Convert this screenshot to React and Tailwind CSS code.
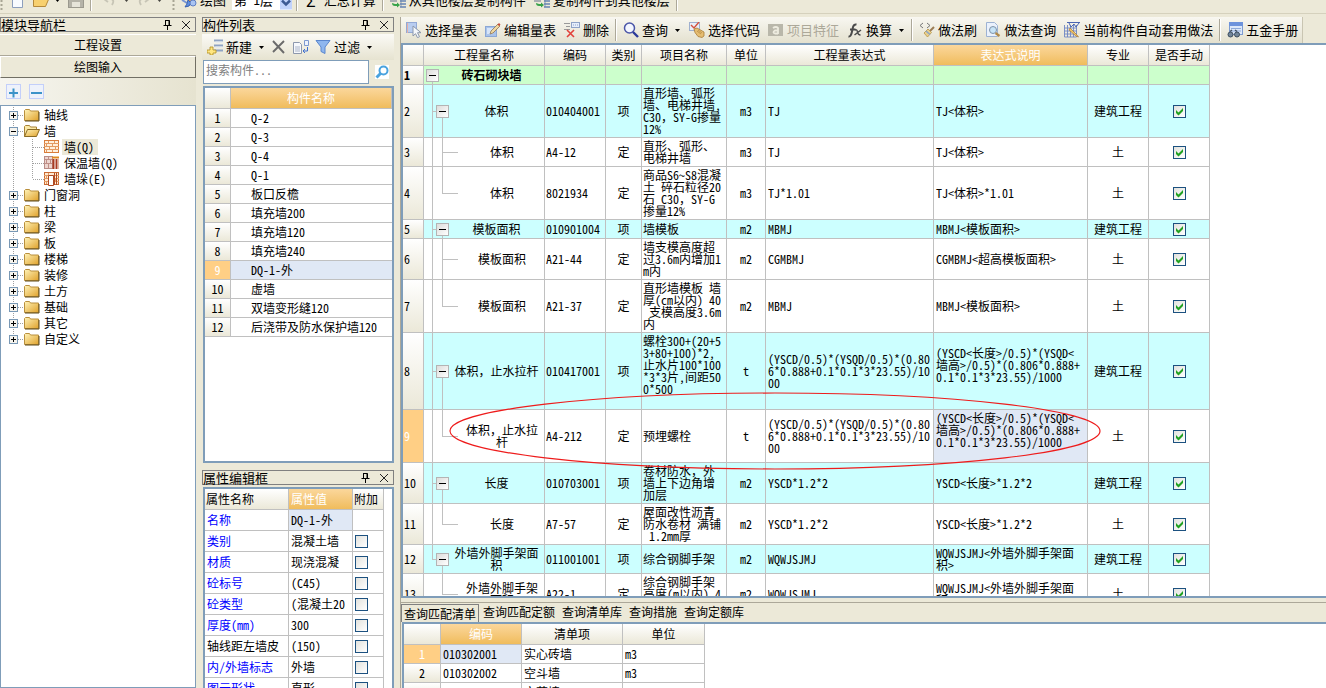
import React from "react";

const FONT = "font-['Noto_Sans_Mono_CJK_SC','Noto_Sans_CJK_SC',monospace]";

/* ---------- data ---------- */

const treeItems = [
  { label: "轴线", kind: "closed" },
  { label: "墙", kind: "open" },
  { label: "墙(Q)", kind: "child", icon: "brick", selected: true },
  { label: "保温墙(Q)", kind: "child", icon: "insulated" },
  { label: "墙垛(E)", kind: "child", icon: "pier", last: true },
  { label: "门窗洞", kind: "closed" },
  { label: "柱", kind: "closed" },
  { label: "梁", kind: "closed" },
  { label: "板", kind: "closed" },
  { label: "楼梯", kind: "closed" },
  { label: "装修", kind: "closed" },
  { label: "土方", kind: "closed" },
  { label: "基础", kind: "closed" },
  { label: "其它", kind: "closed" },
  { label: "自定义", kind: "closed", end: true },
];

const components = [
  "Q-2", "Q-3", "Q-4", "Q-1", "板口反檐", "填充墙200", "填充墙120", "填充墙240",
  "DQ-1-外", "虚墙", "双墙变形缝120", "后浇带及防水保护墙120",
];

const properties = [
  { name: "名称", value: "DQ-1-外", selected: true, noBox: true },
  { name: "类别", value: "混凝土墙" },
  { name: "材质", value: "现浇混凝" },
  { name: "砼标号", value: "(C45)" },
  { name: "砼类型", value: "(混凝土20" },
  { name: "厚度(mm)", value: "300" },
  { name: "轴线距左墙皮", value: "(150)", plain: true },
  { name: "内/外墙标志", value: "外墙" },
  { name: "图元形状", value: "直形" },
];

const EXPR = "(YSCD/0.5)*(YSQD/0.5)*(0.80\n6*0.888+0.1*0.1*3*23.55)/10\n00";
const EXPR_NOTE = "(YSCD<长度>/0.5)*(YSQD<\n墙高>/0.5)*(0.806*0.888+\n0.1*0.1*3*23.55)/1000\n ";

const rows = [
  { h: "h-[19px]", level: 0, name: "砖石砌块墙" },
  { h: "h-[53px]", level: 1, name: "体积", code: "010404001", type: "项", item: "直形墙、弧形\n墙、电梯井墙,\nC30，SY-G掺量\n12%", unit: "m3", expr: "TJ", note: "TJ<体积>", major: "建筑工程" },
  { h: "h-[29px]", level: 2, name: "体积", code: "A4-12", type: "定", item: "直形、弧形、\n电梯井墙", unit: "m3", expr: "TJ", note: "TJ<体积>", major: "土" },
  { h: "h-[53px]", level: 2, last: true, name: "体积", code: "8021934", type: "定", item: "商品S6~S8混凝\n土 碎石粒径20\n石 C30，SY-G\n掺量12%", unit: "m3", expr: "TJ*1.01", note: "TJ<体积>*1.01", major: "土" },
  { h: "h-[19px]", level: 1, name: "模板面积", code: "010901004", type: "项", item: "墙模板", unit: "m2", expr: "MBMJ", note: "MBMJ<模板面积>", major: "建筑工程" },
  { h: "h-[41px]", level: 2, name: "模板面积", code: "A21-44", type: "定", item: "墙支模高度超\n过3.6m内增加1\nm内", unit: "m2", expr: "CGMBMJ", note: "CGMBMJ<超高模板面积>", major: "土" },
  { h: "h-[53px]", level: 2, last: true, name: "模板面积", code: "A21-37", type: "定", item: "直形墙模板 墙\n厚(cm以内) 40\n 支模高度3.6m\n内", unit: "m2", expr: "MBMJ", note: "MBMJ<模板面积>", major: "土" },
  { h: "h-[77px]", level: 1, name: "体积，止水拉杆", code: "010417001", type: "项", item: "螺栓300+(20+5\n3+80+100)*2,\n止水片100*100\n*3*3片,间距50\n0*500", lift: true, unit: "t", expr: EXPR, note: EXPR_NOTE, major: "建筑工程" },
  { h: "h-[53px]", level: 2, last: true, current: true, name: "体积，止水拉\n杆", code: "A4-212", type: "定", item: "预埋螺栓", unit: "t", expr: EXPR, note: EXPR_NOTE, major: "土" },
  { h: "h-[41px]", level: 1, name: "长度", code: "010703001", type: "项", item: "卷材防水，外\n墙上下边角增\n加层", unit: "m2", expr: "YSCD*1.2*2", note: "YSCD<长度>*1.2*2", major: "建筑工程" },
  { h: "h-[41px]", level: 2, last: true, name: "长度", code: "A7-57", type: "定", item: "屋面改性沥青\n防水卷材 满铺\n 1.2mm厚", unit: "m2", expr: "YSCD*1.2*2", note: "YSCD<长度>*1.2*2", major: "土" },
  { h: "h-[29px]", level: 1, end: true, name: "外墙外脚手架面\n积", code: "011001001", type: "项", item: "综合钢脚手架", unit: "m2", expr: "WQWJSJMJ", note: "WQWJSJMJ<外墙外脚手架面\n积>", major: "建筑工程" },
  { h: "h-[41px]", level: 2, last: true, after: true, name: "外墙外脚手架\n面积", code: "A22-1", type: "定", item: "综合钢脚手架\n高度(m以内) 4\n0.5", unit: "m2", expr: "WQWJSJMJ", note: "WQWJSJMJ<外墙外脚手架面\n积>", major: "土" },
];

/* ---------- small parts ---------- */

const HEAD = "bg-linear-to-b from-white to-[#ebe8d8] font-normal";
const HEAD_ON = "bg-linear-to-b from-[#fbd79b] to-[#f0bc5b] font-normal text-white";
const ROWHEAD = "bg-linear-to-b from-white to-[#ebe8d8] font-normal";
const CELL = "border-r border-b border-[#c0c0c0] p-0";

function Tick({ label, defaultChecked = false }) {
  return (
    <span className="inline-grid size-[13px] align-middle">
      <input
        type="checkbox"
        aria-label={label}
        defaultChecked={defaultChecked}
        className="peer col-start-1 row-start-1 size-[13px] appearance-none border border-[#1c5180] bg-linear-to-br from-[#e2e2dd] to-white"
      />
      <svg viewBox="0 0 13 13" className="pointer-events-none invisible z-10 col-start-1 row-start-1 size-[13px] peer-checked:visible">
        <path d="M3 5v3l2.500 2.500L10 6V3L5.500 7.500z" fill="#21a121" />
      </svg>
    </span>
  );
}

function PanelTitle({ children }) {
  return (
    <div className="flex h-[15px] shrink-0 items-center border border-[#808080] pr-1">
      <h2 className="flex-1 text-[13px] leading-[13px]">{children}</h2>
      <button type="button" aria-label="固定" className="mr-2 size-2.5">
        <svg viewBox="0 0 10 10" className="size-2.5" fill="none" stroke="#000">
          <path d="M2.500 0.500h4v5M6 0.500v5M2.500 0v6M0.500 5.500h8M4.500 6v4" />
        </svg>
      </button>
      <button type="button" aria-label="关闭" className="size-2.5">
        <svg viewBox="0 0 10 10" className="size-2.5" fill="none" stroke="#222">
          <path d="M1 1l8 8M9 1l-8 8" />
        </svg>
      </button>
    </div>
  );
}

const Caret = () => (
  <svg viewBox="0 0 5 3" className="h-[3px] w-[5px]">
    <path d="M0 0h5L2.500 3z" fill="#000" />
  </svg>
);

const Sep = () => <span className="-mx-0.5 h-[22px] w-0.5 shrink-0 border-l border-[#aca899] bg-white" />;

const Grip = () => (
  <svg viewBox="0 0 3 24" className="h-6 w-[3px]">
    <path d="M1.500 0v24" stroke="#a8a594" strokeWidth="2" strokeDasharray="2 2" />
  </svg>
);

function Icon({ name }) {
  return (
    <svg viewBox="0 0 16 16" className="size-4 shrink-0" fill="none">
      {ICONS[name]}
    </svg>
  );
}

const ICONS = {
  pickTable: (
    <>
      <rect x="0.500" y="0.500" width="10" height="10" fill="#b9cdf0" stroke="#93a9d6" />
      <path d="M1.500 1v10" stroke="#e3b0a8" />
      <path d="M7 4v10l2.500-2.300 2 4 2-1-2-4H15z" fill="#f4f7fb" stroke="#8b97ab" />
    </>
  ),
  editTable: (
    <>
      <rect x="0.500" y="4.500" width="11" height="10" fill="#a9c3ea" stroke="#8ba7d5" />
      <rect x="2" y="6" width="6" height="6" fill="#d6e4f8" />
      <path d="M5 12l1-3 7-7 2 2-7 7z" fill="#f0d9a0" stroke="#8d7558" strokeWidth="0.800" />
      <path d="M12.500 2.500L14 1l1.500 1.500L14 4z" fill="#c94b36" />
    </>
  ),
  remove: (
    <>
      <path d="M0 1.500h6M2 4.500h4M0 7.500h6" stroke="#999" />
      <rect x="7.500" y="0.500" width="8" height="5" fill="#e6eefb" stroke="#8ea2c6" />
      <path d="M9 3h5" stroke="#8ea2c6" strokeDasharray="1 1" />
      <path d="M3 8l7 7M10 8l-7 7" stroke="#e2413a" strokeWidth="1.600" />
    </>
  ),
  search: (
    <>
      <circle cx="6.500" cy="6" r="5" fill="#f3f6ff" stroke="#4a55a8" strokeWidth="1.500" />
      <path d="M10 10l5 5" stroke="#2c3a9a" strokeWidth="2.400" />
    </>
  ),
  pickCode: (
    <>
      <rect x="0.500" y="0.500" width="10" height="8" fill="#e8eef8" stroke="#9fb0cf" />
      <path d="M2 3l3 3 5-6" stroke="#d4513c" strokeWidth="1.400" />
      <path d="M5 7l3-1 7 4v4l-2 1.500-4-1-3-4z" fill="#e5bd72" stroke="#a87b36" strokeWidth="0.800" />
      <path d="M8 9l4 3M9 8l4 3" stroke="#a87b36" strokeWidth="0.600" />
    </>
  ),
  feature: (
    <>
      <rect x="0" y="2" width="15" height="12" fill="#b9b7aa" />
      <path d="M5 6q3-2 5 0v6M10 8.500H7q-3 2 0 3h3" stroke="#eeece0" strokeWidth="1.800" />
    </>
  ),
  fx: (
    <>
      <path d="M1.500 14.500q2.500 0.500 3.500-5l1-4.500q1-3 3.500-2.500M3 7.500h5.500" stroke="#4a4a4a" strokeWidth="2" />
      <path d="M8 8q2-1 2.500 2t3 3M14 8L7.500 13" stroke="#4a4a4a" strokeWidth="1.500" />
    </>
  ),
  brush: (
    <>
      <path d="M4 1L1 3.500 4 6M8 1l3 2.500L8 6" stroke="#777" />
      <path d="M15 5l-4 4" stroke="#9c7d55" strokeWidth="2" />
      <path d="M9 7l3.500 3.500L8.500 15l-3.500-4z" fill="#e9cf8a" stroke="#b99545" strokeWidth="0.800" />
      <path d="M7 9l4 3.500" stroke="#8aa5c9" strokeWidth="1.500" />
    </>
  ),
  docSearch: (
    <>
      <path d="M1.500 0.500h8l3 3v11h-11z" fill="#eaf1fc" stroke="#9db2d3" />
      <circle cx="8" cy="8" r="3.500" fill="#c7e4f7" stroke="#7f93a8" />
      <path d="M10.500 11l4 3" stroke="#b08a4a" strokeWidth="2.200" />
    </>
  ),
  autoApply: (
    <>
      <path d="M0.500 3v12h12V3M0.500 6h12M0.500 9h12M0.500 12h12M3.500 3v12M6.500 3v12M9.500 3v12" stroke="#6f87c4" strokeWidth="0.900" />
      <path d="M3 0.500h13M5 1l2 4 3-3 2 3 3-4" stroke="#4b66b2" />
      <path d="M6 6l7 7 1.500 2-2.500-1-7-6z" fill="#f1c868" stroke="#a97737" strokeWidth="0.700" />
    </>
  ),
  handbook: (
    <>
      <rect x="2.500" y="0.500" width="13" height="12" fill="#dce8fa" stroke="#7c9bd2" />
      <rect x="2" y="0" width="14" height="4" fill="#6d93dc" />
      <path d="M4 6.500h10M4 9h10" stroke="#8eaada" />
      <circle cx="3.500" cy="12.500" r="2.500" fill="#72869a" stroke="#3d4d5e" />
      <circle cx="10" cy="12.500" r="2.500" fill="#72869a" stroke="#3d4d5e" />
      <path d="M3 9.500l2-1.500M10 9.500L8 8" stroke="#3d4d5e" strokeWidth="1.500" />
    </>
  ),
  create: (
    <>
      <path d="M7 1.500h9M7 6.500h9M7 11.500h9" stroke="#8fa3c4" strokeWidth="2" />
      <path d="M8.500 3h7M8.500 8h7" stroke="#dce5f3" />
      <path d="M3 8h3v3h3v3H6v2H3v-2H0v-3h3z" fill="#ffe680" stroke="#b08d20" strokeWidth="0.800" />
    </>
  ),
  cross: <path d="M2 2l11 12M13 2L2 13" stroke="#6b6b6b" strokeWidth="1.900" />,
  copy: (
    <>
      <path d="M0.500 3.500h6l2 2v9h-8z" fill="#f6f8fc" stroke="#8d98ad" />
      <path d="M2 8h5M2 10h5M2 12h5" stroke="#aab4c8" />
      <path d="M11.500 1.500h4v5h-4z" fill="#eef3fd" stroke="#7e9ad0" />
      <path d="M14.500 8v4h-4M12 10l-2 2 2 2" stroke="#3f6fd0" />
    </>
  ),
  filter: <path d="M1 1.500h14L10 8v6.500l-4-2V8z" fill="#8eb6ee" stroke="#5a86cd" />,
  newDoc: <path d="M3.500 0.500h7l3 3v12h-10z" fill="#f8fbff" stroke="#8d9fbd" />,
  folder: <path d="M0.500 14.500V3.500h5l1 2h6v2h3l-3 7z" fill="#f7d06f" stroke="#b4893a" />,
  save: (
    <>
      <rect x="0.500" y="0.500" width="15" height="15" fill="#b5b3a8" stroke="#9b998e" />
      <rect x="4" y="10" width="8" height="5" fill="#e6e4d9" />
    </>
  ),
  undo: <path d="M2 7l3-4M2 7l4 3M2 7h7q4 1 1 6" stroke="#b8b6a8" strokeWidth="1.800" />,
  redo: <path d="M14 7l-3-4M14 7l-4 3M14 7H7q-4 1-1 6" stroke="#b8b6a8" strokeWidth="1.800" />,
  draw: (
    <>
      <path d="M1 3l6 3M1 8l5 3" stroke="#7896d4" strokeWidth="2" />
      <path d="M15 1L8 9" stroke="#d99a55" strokeWidth="2.500" />
      <path d="M7 8l3 3q-1 4-6 4 2-2 3-7z" fill="#5f8fe0" stroke="#3c62ae" />
      <circle cx="12" cy="11" r="3" fill="#a9c4f2" stroke="#5e7fc4" />
    </>
  ),
  floorCopy: (
    <>
      <rect x="0" y="1" width="7" height="9" fill="#a9adb3" />
      <path d="M1 3.500h5M1 6.500h5" stroke="#dfe3e8" />
      <path d="M11 1v14" stroke="#8798ae" />
      <path d="M10 3h6M10 6h6M10 9h6M10 12h6M10 15h6" stroke="#6684b4" strokeWidth="1.600" />
      <path d="M2 11q0 3 3 3h2v1.500l3-2.500-3-2.500V12H5z" fill="#38a34a" />
    </>
  ),
};

function Tool({ icon, caret, disabled, children }) {
  return (
    <button type="button" disabled={disabled} className="flex shrink-0 items-center gap-[3px] text-[13px] leading-4 whitespace-nowrap disabled:text-[#aca899]">
      {icon && <Icon name={icon} />}
      <span>{children}</span>
      {caret && <span className="flex pr-px pl-1"><Caret /></span>}
    </button>
  );
}

/* ---------- top strip ---------- */

function TopBar() {
  return (
    <header className="flex h-[14px] shrink-0 items-end overflow-hidden border-b border-[#d5d1bd] bg-[#ece9d8]">
      <div className="flex h-[26px] shrink-0 items-center">
        <Grip />
        <button type="button" aria-label="新建文件" className="ml-1.5"><Icon name="newDoc" /></button>
        <button type="button" aria-label="打开" className="ml-2 flex items-center gap-1.5"><Icon name="folder" /><Caret /></button>
        <button type="button" aria-label="保存" className="mr-2 ml-2"><Icon name="save" /></button>
        <Sep />
        <button type="button" aria-label="撤销" className="ml-3 flex items-center gap-1.5 opacity-70"><Icon name="undo" /><Caret /></button>
        <button type="button" aria-label="恢复" className="mr-2.5 ml-1.5 flex items-center gap-1.5 opacity-70"><Icon name="redo" /><Caret /></button>
        <Grip />
        <span className="ml-1.5"><Tool icon="draw">绘图</Tool></span>
        <div className="relative mr-1.5 ml-1.5 flex h-[19px] w-[60px] bg-white">
          <select aria-label="楼层" className="w-full appearance-none pl-0.5 text-[13px] leading-4">
            <option>第 1层</option>
          </select>
          <svg viewBox="0 0 12 18" className="pointer-events-none absolute top-0 right-0 h-[19px] w-3" fill="none">
            <rect width="12" height="18" fill="#c2d3fb" />
            <path d="M2 9l4 4 4-4" stroke="#3d5a94" strokeWidth="2.500" />
          </svg>
        </div>
        <Sep />
        <button type="button" className="mr-2 ml-2.5 flex items-center gap-2 text-[13px] whitespace-nowrap"><span className="text-base">Σ</span>汇总计算</button>
        <Sep />
        <div className="mr-2 ml-2 flex gap-2">
          <Tool icon="floorCopy">从其他楼层复制构件</Tool>
          <Tool icon="floorCopy">复制构件到其他楼层</Tool>
        </div>
        <Sep />
      </div>
    </header>
  );
}

/* ---------- left: navigation ---------- */

function TreeGlyph({ item }) {
  const dot = { stroke: "#a0a0a0", strokeDasharray: "1 1" };
  if (item.kind === "child") {
    return (
      <svg viewBox="0 0 43 16" className="h-4 w-[43px] shrink-0" fill="none">
        <path d="M12.500 0v16" {...dot} />
        <path d={item.last ? "M31.500 0v8" : "M31.500 0v16"} {...dot} />
        <path d="M32 8.500h11" {...dot} />
      </svg>
    );
  }
  return (
    <svg viewBox="0 0 23 16" className="h-4 w-[23px] shrink-0" fill="none">
      <path d={item.end ? "M12.500 0v8" : "M12.500 0v16"} {...dot} />
      <path d="M17 8.500h6" {...dot} />
      <rect x="8.500" y="4.500" width="8" height="8" fill="#f6f4ee" stroke="#7898b5" />
      <path d={item.kind === "open" ? "M10 8.500h5" : "M10 8.500h5M12.500 6v5"} stroke="#000" />
    </svg>
  );
}

function TreeIcon({ item }) {
  const brick = "M0 4.500h15M0 7.500h15M0 10.500h15M4.500 2v2M10.500 2v2M2.500 5v2M8.500 5v2M5.500 8v2M11.500 8v2M2.500 11v2M8.500 11v2";
  return (
    <svg viewBox="0 0 16 16" className="size-4 shrink-0" fill="none">
      <defs>
        <linearGradient id="fold" x1="0" y1="0" x2="1" y2="1">
          <stop offset="0" stopColor="#fff3b8" />
          <stop offset="1" stopColor="#e0a22c" />
        </linearGradient>
      </defs>
      {item.kind === "closed" && (
        <>
          <path d="M0.500 13.500v-10l1-1h4l1 1.500h8v9.500z" fill="url(#fold)" stroke="#b98f3c" />
          <path d="M1 14h14V5" stroke="#5f4a18" />
        </>
      )}
      {item.kind === "open" && (
        <>
          <path d="M0.500 13.500v-10l1-1h4l1 1.500h6v2.500" fill="#fbe9a6" stroke="#a88236" />
          <path d="M0.500 13.500l3-7h12l-3 7z" fill="url(#fold)" stroke="#8a6a24" />
        </>
      )}
      {item.icon === "brick" && (
        <>
          <rect x="0.500" y="1.500" width="14" height="12" fill="#fff0dc" stroke="#d97c3a" />
          <path d={brick} stroke="#e39a62" />
        </>
      )}
      {item.icon === "insulated" && (
        <>
          <rect x="0.500" y="1.500" width="8" height="12" fill="#edd5cf" stroke="#b98c86" />
          <path d="M1 4.500h8M1 8.500h8M4.500 2v2M2.500 5v3M6.500 5v3M4.500 9v4" stroke="#bf8f88" />
          <path d="M8 2.500h7" stroke="#e08a22" strokeWidth="2" />
          <path d="M9.500 4v10M12.500 4v10" stroke="#a83a22" strokeWidth="2" />
          <path d="M14.500 3v11" stroke="#e3b9a6" />
        </>
      )}
      {item.icon === "pier" && (
        <>
          <rect x="0.500" y="1.500" width="14" height="12" fill="#ffe9d2" stroke="#c96a33" />
          <path d={brick} stroke="#e39a62" />
          <path d="M4.500 4.500h5v10h-5z" fill="#fff" stroke="#b04a22" />
          <path d="M10.500 2v12M12.500 2v12" stroke="#b04a22" />
        </>
      )}
    </svg>
  );
}

function NavPanel() {
  return (
    <aside className="flex w-[196px] shrink-0 flex-col">
      <PanelTitle>模块导航栏</PanelTitle>
      <button type="button" className="mt-0.5 h-[22px] shrink-0 border-t border-b border-t-white border-b-[#aca899] leading-5">工程设置</button>
      <button type="button" className="h-[22px] shrink-0 border border-t-white border-r-[#716f64] border-b-[#716f64] border-l-white leading-5">绘图输入</button>
      <div className="flex h-[27px] shrink-0 items-center gap-2 bg-linear-to-r from-[#f6f5ef] to-[#e6e3d0] pl-1.5">
        {["展开", "折叠"].map((t, i) => (
          <button key={t} type="button" aria-label={t} className="size-[15px] border border-[#c3cffa] bg-[#eef2fb]">
            <svg viewBox="0 0 13 13" className="size-[13px]" fill="none" stroke="#3c93c8" strokeWidth="2">
              <path d={i === 0 ? "M2 8h9M6.500 3.500v9" : "M1 8h11"} />
            </svg>
          </button>
        ))}
      </div>
      <ul className="min-h-0 flex-1 overflow-hidden border border-[#7f9db9] bg-white pt-px">
        {treeItems.map((item) => (
          <li key={item.label} className="flex h-4 items-center">
            <TreeGlyph item={item} />
            <TreeIcon item={item} />
            <span className={item.selected ? "ml-0.5 bg-[#ece9d8] pr-1 pl-0.5 leading-4" : "ml-0.5 px-0.5 leading-4"}>
              {item.label}
            </span>
          </li>
        ))}
      </ul>
    </aside>
  );
}

/* ---------- middle: component list + properties ---------- */

function ComponentPanel() {
  return (
    <section className="flex min-h-0 flex-1 flex-col">
      <PanelTitle>构件列表</PanelTitle>
      <div className="mt-0.5 flex h-[26px] shrink-0 items-center gap-1.5 bg-linear-to-b from-[#fbfaf6] to-[#e6e3d0] pl-[5px]">
        <Tool icon="create" caret>新建</Tool>
        <button type="button" aria-label="删除"><Icon name="cross" /></button>
        <button type="button" aria-label="复制"><Icon name="copy" /></button>
        <Tool icon="filter" caret>过滤</Tool>
      </div>
      <div className="flex h-6 shrink-0 gap-1.5 pl-px">
        <input aria-label="搜索构件" placeholder="搜索构件..." className="w-[166px] border border-[#7f9db9] bg-white pb-1 pl-0.5 text-xs placeholder:text-[#808080]" />
        <button type="button" aria-label="搜索" className="my-auto size-3.5 bg-white">
          <svg viewBox="0 0 14 14" className="size-3.5" fill="none" stroke="#4aa3df" strokeWidth="2">
            <circle cx="8.500" cy="5.500" r="4" />
            <path d="M5.500 8.500l-4 4" strokeWidth="3" />
          </svg>
        </button>
      </div>
      <div className="mt-0.5 ml-px min-h-0 flex-1 overflow-hidden border-2 border-[#7f9db9] bg-white">
        <table className="w-full table-fixed border-separate border-spacing-0">
          <colgroup><col className="w-[26px]" /><col /></colgroup>
          <thead>
            <tr className="h-[21px]">
              <th className={`${CELL} ${HEAD}`} />
              <th className={`${CELL} ${HEAD_ON}`}>构件名称</th>
            </tr>
          </thead>
          <tbody>
            {components.map((c, i) => (
              <tr key={c} className="h-[19px]">
                <th scope="row" className={i === 8 ? `${CELL} bg-[#ffcf85] font-normal text-white` : `${CELL} ${ROWHEAD}`}>{i + 1}</th>
                <td className={i === 8 ? "border-b border-[#c0c0c0] bg-[#e0e8f5] p-0 pl-5" : "border-b border-[#c0c0c0] p-0 pl-5"}>{c}</td>
              </tr>
            ))}
          </tbody>
        </table>
      </div>
    </section>
  );
}

function PropertyPanel() {
  return (
    <section className="mt-[7px] flex h-[218px] shrink-0 flex-col overflow-hidden">
      <PanelTitle>属性编辑框</PanelTitle>
      <div className="mt-0.5 ml-px min-h-0 flex-1 overflow-hidden border-2 border-b-0 border-[#7f9db9] bg-white">
        <table className="w-[179px] table-fixed border-separate border-spacing-0">
          <colgroup><col className="w-[84px]" /><col className="w-16" /><col className="w-[31px]" /></colgroup>
          <thead>
            <tr className="h-[21px] text-left">
              <th className={`${CELL} ${HEAD} pl-px`}>属性名称</th>
              <th className={`${CELL} ${HEAD_ON} pl-0.5`}>属性值</th>
              <th className={`${CELL} ${HEAD} pl-px`}>附加</th>
            </tr>
          </thead>
          <tbody>
            {properties.map((p) => (
              <tr key={p.name} className="h-[21px] whitespace-nowrap">
                <td className={p.plain ? `${CELL} pl-0.5` : `${CELL} pl-0.5 text-[#0000ff]`}>{p.name}</td>
                <td className={p.selected ? `${CELL} bg-[#e0e8f5] pl-0.5` : `${CELL} pl-0.5`}>{p.value}</td>
                <td className={`${CELL} pl-0.5 leading-3`}>{!p.noBox && <Tick label={`${p.name} 附加`} />}</td>
              </tr>
            ))}
          </tbody>
        </table>
      </div>
    </section>
  );
}

/* ---------- right: quantity table ---------- */

function NameCell({ row }) {
  const line = "absolute bg-[#c0c0c0]";
  return (
    <td className={`${CELL} relative`}>
      {row.level === 0 && <span className={`${line} top-1/2 bottom-0 left-2 w-px`} />}
      {row.level > 0 && !row.after && <span className={row.end ? `${line} top-0 bottom-1/2 left-2 w-px` : `${line} inset-y-0 left-2 w-px`} />}
      {row.level === 1 && (
        <>
          <span className={`${line} top-1/2 left-2 h-px w-2`} />
          <span className={`${line} top-1/2 bottom-0 left-[18px] w-px`} />
        </>
      )}
      {row.level === 2 && (
        <>
          <span className={row.last ? `${line} top-0 bottom-1/2 left-[18px] w-px` : `${line} inset-y-0 left-[18px] w-px`} />
          <span className={`${line} top-1/2 left-[18px] h-px w-4`} />
        </>
      )}
      <div className={row.level === 0 ? "flex items-center pl-0.5" : row.level === 1 ? "flex items-center pl-3" : "flex items-center pl-9"}>
        {row.level < 2 && (
          <button type="button" aria-label="折叠" className="relative size-[13px] shrink-0 border border-[#b4b4b4] bg-linear-to-br from-[#dddddb] to-white">
            <span className="mx-auto block h-px w-[7px] bg-black" />
          </button>
        )}
        <span className={row.level === 0 ? "flex-1 text-center font-bold" : "flex-1 text-center"}>{row.name}</span>
      </div>
    </td>
  );
}

function QuantityTable() {
  const heads = ["", "工程量名称", "编码", "类别", "项目名称", "单位", "工程量表达式", "表达式说明", "专业", "是否手动"];
  return (
    <div className="relative min-h-0 flex-1 overflow-hidden border-2 border-r-0 border-[#7f9db9] bg-white">
      <table className="w-[807px] table-fixed border-separate border-spacing-0 leading-3 whitespace-pre">
        <colgroup>
          <col className="w-[21px]" /><col className="w-[121px]" /><col className="w-[61px]" /><col className="w-9" />
          <col className="w-[85px]" /><col className="w-[39px]" /><col className="w-[168px]" /><col className="w-[154px]" />
          <col className="w-[61px]" /><col className="w-[61px]" />
        </colgroup>
        <thead>
          <tr className="h-[21px]">
            {heads.map((h) => (
              <th key={h} className={h === "表达式说明" ? `${CELL} ${HEAD_ON}` : `${CELL} ${HEAD}`}>{h}</th>
            ))}
          </tr>
        </thead>
        <tbody>
          {rows.map((r, i) => {
            const tint = r.level === 0 ? "bg-[#ccffcc]" : r.level === 1 ? "bg-[#ccffff]" : "bg-white";
            return (
              <tr key={i} className={`${r.h} ${tint}`}>
                <th scope="row" className={r.current ? `${CELL} bg-[#ffcf85] pl-px text-left font-normal text-white` : i === 0 ? `${CELL} bg-linear-to-b from-white to-[#ebe8d8] pl-px text-left font-bold` : `${CELL} ${ROWHEAD} pl-px text-left`}>
                  {i + 1}
                </th>
                <NameCell row={r} />
                <td className={`${CELL} pl-px`}>{r.code}</td>
                <td className={`${CELL} text-center`}>{r.type}</td>
                <td className={r.lift ? `${CELL} pb-3 pl-px` : `${CELL} pl-px`}>{r.item}</td>
                <td className={`${CELL} text-center`}>{r.unit}</td>
                <td className={`${CELL} pl-0.5`}>{r.expr}</td>
                <td className={r.current ? `${CELL} bg-[#e0e8f5] pl-0.5` : `${CELL} pl-0.5`}>{r.note}</td>
                <td className={`${CELL} text-center`}>{r.major}</td>
                <td className={`${CELL} text-center`}>{r.level > 0 && <Tick label={`第${i + 1}行 是否手动`} defaultChecked />}</td>
              </tr>
            );
          })}
        </tbody>
      </table>
      <svg viewBox="0 0 652 78" className="pointer-events-none absolute top-[347px] left-[46px] h-[78px] w-[652px]" fill="none">
        <ellipse cx="326" cy="39" rx="325" ry="38" stroke="#ee1c1c" strokeWidth="1.200" />
      </svg>
    </div>
  );
}

function QueryPanel() {
  const tabs = ["查询匹配清单", "查询匹配定额", "查询清单库", "查询措施", "查询定额库"];
  const list = [
    ["010302001", "实心砖墙", "m3"],
    ["010302002", "空斗墙", "m3"],
    ["010302003", "空花墙", "m3"],
  ];
  return (
    <section className="mt-1 flex h-[86px] shrink-0 flex-col border-t border-[#aca899] pt-px">
      <div role="tablist" className="flex h-[18px] shrink-0 items-start leading-4">
        {tabs.map((t, i) => (
          <button
            key={t}
            type="button"
            role="tab"
            aria-selected={i === 0}
            className={i === 0 ? "mr-1 h-[18px] border border-b-0 border-[#808080] px-0.5 pt-px" : "mr-[7px]"}
          >
            {t}
          </button>
        ))}
      </div>
      <div className="ml-px min-h-0 flex-1 overflow-hidden border-t-2 border-l-2 border-[#7f9db9] bg-white">
        <table className="w-[301px] table-fixed border-separate border-spacing-0">
          <colgroup><col className="w-[37px]" /><col className="w-[81px]" /><col className="w-[101px]" /><col className="w-[82px]" /></colgroup>
          <thead>
            <tr className="h-[21px]">
              <th className={`${CELL} ${HEAD}`} />
              <th className={`${CELL} ${HEAD_ON}`}>编码</th>
              <th className={`${CELL} ${HEAD}`}>清单项</th>
              <th className={`${CELL} ${HEAD}`}>单位</th>
            </tr>
          </thead>
          <tbody>
            {list.map((r, i) => (
              <tr key={r[0]} className="h-[19px]">
                <th scope="row" className={i === 0 ? `${CELL} bg-[#ffcf85] font-normal text-white` : `${CELL} ${ROWHEAD}`}>{i + 1}</th>
                <td className={i === 0 ? `${CELL} bg-[#e0e8f5] pl-0.5` : `${CELL} pl-0.5`}>{r[0]}</td>
                <td className={`${CELL} pl-0.5`}>{r[1]}</td>
                <td className={`${CELL} pl-0.5`}>{r[2]}</td>
              </tr>
            ))}
          </tbody>
        </table>
      </div>
    </section>
  );
}

export default function App() {
  return (
    <div className={`${FONT} flex h-screen flex-col overflow-hidden bg-[#ece9d8] text-xs leading-4 text-black`}>
      <TopBar />
      <div className="flex min-h-0 flex-1 gap-1.5 pt-[3px]">
        <NavPanel />
        <div className="flex w-[192px] shrink-0 flex-col">
          <ComponentPanel />
          <PropertyPanel />
        </div>
        <main className="flex min-w-0 flex-1 flex-col border-l border-[#aca899]">
          <div className="flex h-[26px] shrink-0 bg-[#ece9d8]">
            <div role="toolbar" className="flex items-center gap-2 border-r border-[#c9c5b2] bg-linear-to-b from-[#f8f7f1] to-[#e4e1cf] pr-1 pl-[5px]">
              <Tool icon="pickTable">选择量表</Tool>
              <Tool icon="editTable">编辑量表</Tool>
              <Tool icon="remove">删除</Tool>
              <Sep />
              <Tool icon="search" caret>查询</Tool>
              <Tool icon="pickCode">选择代码</Tool>
              <Tool icon="feature" disabled>项目特征</Tool>
              <Tool icon="fx" caret>换算</Tool>
              <Sep />
              <Tool icon="brush">做法刷</Tool>
              <Tool icon="docSearch">做法查询</Tool>
              <Tool icon="autoApply">当前构件自动套用做法</Tool>
              <Sep />
              <Tool icon="handbook">五金手册</Tool>
            </div>
          </div>
          <QuantityTable />
          <QueryPanel />
        </main>
      </div>
    </div>
  );
}
